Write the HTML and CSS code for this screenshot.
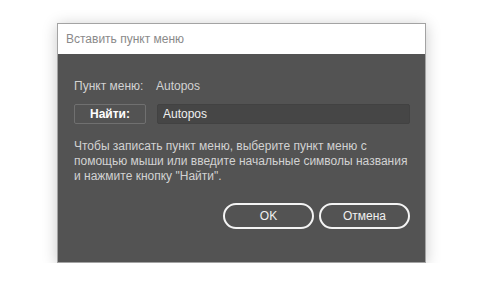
FILE: index.html
```html
<!DOCTYPE html>
<html lang="ru">
<head>
<meta charset="UTF-8">
<title>Вставить пункт меню</title>
<link rel="stylesheet" href="styles.css">
</head>
<body>

<div class="dialog">
  <div class="dialog-title">Вставить пункт меню</div>

  <div class="dialog-body">
    <div class="item-row">
      <span class="item-label">Пункт меню:</span>
      <span class="item-value">Autopos</span>
    </div>

    <div class="find-row">
      <button class="find-btn">Найти:</button>
      <input class="find-input" type="text" value="Autopos">
    </div>

    <p class="hint">Чтобы записать пункт меню, выберите пункт меню с помощью мыши или введите начальные символы названия и нажмите кнопку "Найти".</p>

    <div class="actions">
      <button class="pill-btn">OK</button>
      <button class="pill-btn">Отмена</button>
    </div>
  </div>
</div>

</body>
</html>
```

FILE: styles.css
```css
/* Reset */
* {
  box-sizing: border-box;
  margin: 0;
  padding: 0;
  font-family: 'Liberation Sans', Arial, sans-serif;
}

body {
  background: #ffffff;
  padding: 23px 0 0 57px;
}

/* Dialog frame */
.dialog {
  width: 369px;
  height: 240px;
  border: 1px solid #a3a3a3;
  background: #535353;
  box-shadow: 0 2px 14px rgba(0, 0, 0, 0.22);
  display: flex;
  flex-direction: column;
}

.dialog-title {
  height: 30px;
  background: #ffffff;
  color: #8a8a8a;
  font-size: 12px;
  line-height: 31px;
  padding-left: 8px;
}

.dialog-body {
  flex: 1;
  padding: 24px 12px 0 16px;
  color: #d2d2d2;
  font-size: 12px;
}

/* Selected item */
.item-row {
  display: flex;
  line-height: 16px;
}

.item-label {
  width: 82px;
}

/* Find row */
.find-row {
  display: flex;
  gap: 11px;
  margin-top: 10px;
  height: 20px;
}

.find-btn {
  width: 72px;
  height: 20px;
  background: #535353;
  border: 1px solid #707070;
  border-radius: 2px;
  color: #ffffff;
  font-size: 12px;
  font-weight: bold;
}

.find-input {
  flex: 1;
  height: 20px;
  margin-right: 3px;
  background: #464646;
  border: 1px solid #424242;
  border-radius: 2px;
  color: #f0f0f0;
  font-size: 12px;
  padding-left: 5px;
  outline: none;
}

/* Hint */
.hint {
  margin-top: 15px;
  line-height: 15px;
}

/* Bottom buttons */
.actions {
  display: flex;
  justify-content: flex-end;
  gap: 5px;
  margin-top: 19px;
  padding-right: 3px;
}

.pill-btn {
  width: 91px;
  height: 26px;
  background: transparent;
  border: 2px solid #f4f4f4;
  border-radius: 13px;
  color: #f0f0f0;
  font-size: 12px;
}
```
